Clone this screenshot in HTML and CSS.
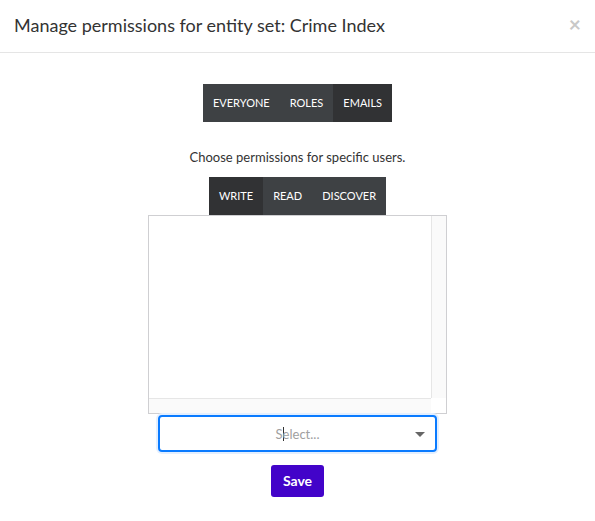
FILE: index.html
```html
<!DOCTYPE html>
<html>
<head>
<meta charset="utf-8">
<link rel="stylesheet" href="styles.css">
</head>
<body>
<div class="modal">
  <div class="header">
    <h4 class="title">Manage permissions for entity set: Crime Index</h4>
    <span class="close">×</span>
  </div>
  <div class="body">
    <div class="group group-top">
      <div class="btn">EVERYONE</div>
      <div class="btn">ROLES</div>
      <div class="btn active">EMAILS</div>
    </div>
    <p class="hint">Choose permissions for specific users.</p>
    <div class="group group-perm">
      <div class="btn active">WRITE</div>
      <div class="btn">READ</div>
      <div class="btn">DISCOVER</div>
    </div>
    <div class="listbox">
      <div class="list-area"></div>
      <div class="vtrack"></div>
      <div class="htrack"></div>
      <div class="corner"></div>
    </div>
    <div class="select">
      <span class="placeholder">S<span class="caret"></span>elect...</span>
      <span class="arrow"></span>
    </div>
    <div class="save">Save</div>
  </div>
</div>
</body>
</html>
```

FILE: styles.css
```css
html, body {
  margin: 0;
  padding: 0;
  background: #fff;
  font-family: Lato, "Open Sans", sans-serif;
}
.modal {
  width: 595px;
  height: 521px;
}
.header {
  border-bottom: 1px solid #e5e5e5;
  display: flex;
  align-items: center;
  justify-content: space-between;
  padding: 0 14px;
  box-sizing: border-box;
  height: 53px;
}
.title {
  margin: 0;
  font-size: 18px;
  font-weight: 400;
  color: #333;
  position: relative;
  top: -1px;
}
.close {
  color: #c8c8c8;
  font-size: 21px;
  font-weight: 700;
  line-height: 1;
  position: relative;
  top: -3px;
}
.body {
  display: flex;
  flex-direction: column;
  align-items: center;
  padding-top: 31px;
}
.group {
  display: flex;
}
.btn {
  background: #3e4144;
  color: #fff;
  font-size: 11px;
  height: 38px;
  line-height: 38px;
  padding: 0 10px;
}
.btn.active {
  background: #313234;
}
.hint {
  margin: 27px 0 0 0;
  font-size: 13px;
  color: #333;
  line-height: 16px;
}
.group-perm {
  margin-top: 12px;
}
.listbox {
  width: 299px;
  height: 199px;
  box-sizing: border-box;
  border: 1px solid #cfcfd2;
  display: grid;
  grid-template-columns: 1fr 15px;
  grid-template-rows: 1fr 15px;
}
.list-area {
  background: #fff;
}
.vtrack {
  background: #fafafa;
  border-left: 1px solid #e6e6e6;
}
.htrack {
  background: #fafafa;
  border-top: 1px solid #e6e6e6;
}
.corner {
  background: #fff;
}
.select {
  margin-top: 1px;
  width: 279px;
  height: 37px;
  box-sizing: border-box;
  border: 2px solid #0a7bff;
  border-radius: 4px;
  box-shadow: 0 0 0 2px #e3efff;
  display: flex;
  align-items: center;
  justify-content: center;
  position: relative;
}
.placeholder {
  color: #a0a0a0;
  font-size: 13px;
}
.caret {
  display: inline-block;
  width: 1px;
  height: 14px;
  background: #333;
  vertical-align: -2px;
  margin-right: -1px;
}
.arrow {
  position: absolute;
  right: 10px;
  top: 15px;
  width: 0;
  height: 0;
  border-left: 5px solid transparent;
  border-right: 5px solid transparent;
  border-top: 5px solid #666;
}
.save {
  margin-top: 13px;
  width: 53px;
  height: 32px;
  line-height: 32px;
  text-align: center;
  background: #4203c9;
  color: #fff;
  font-weight: 700;
  font-size: 14px;
  border-radius: 3px;
}
```
